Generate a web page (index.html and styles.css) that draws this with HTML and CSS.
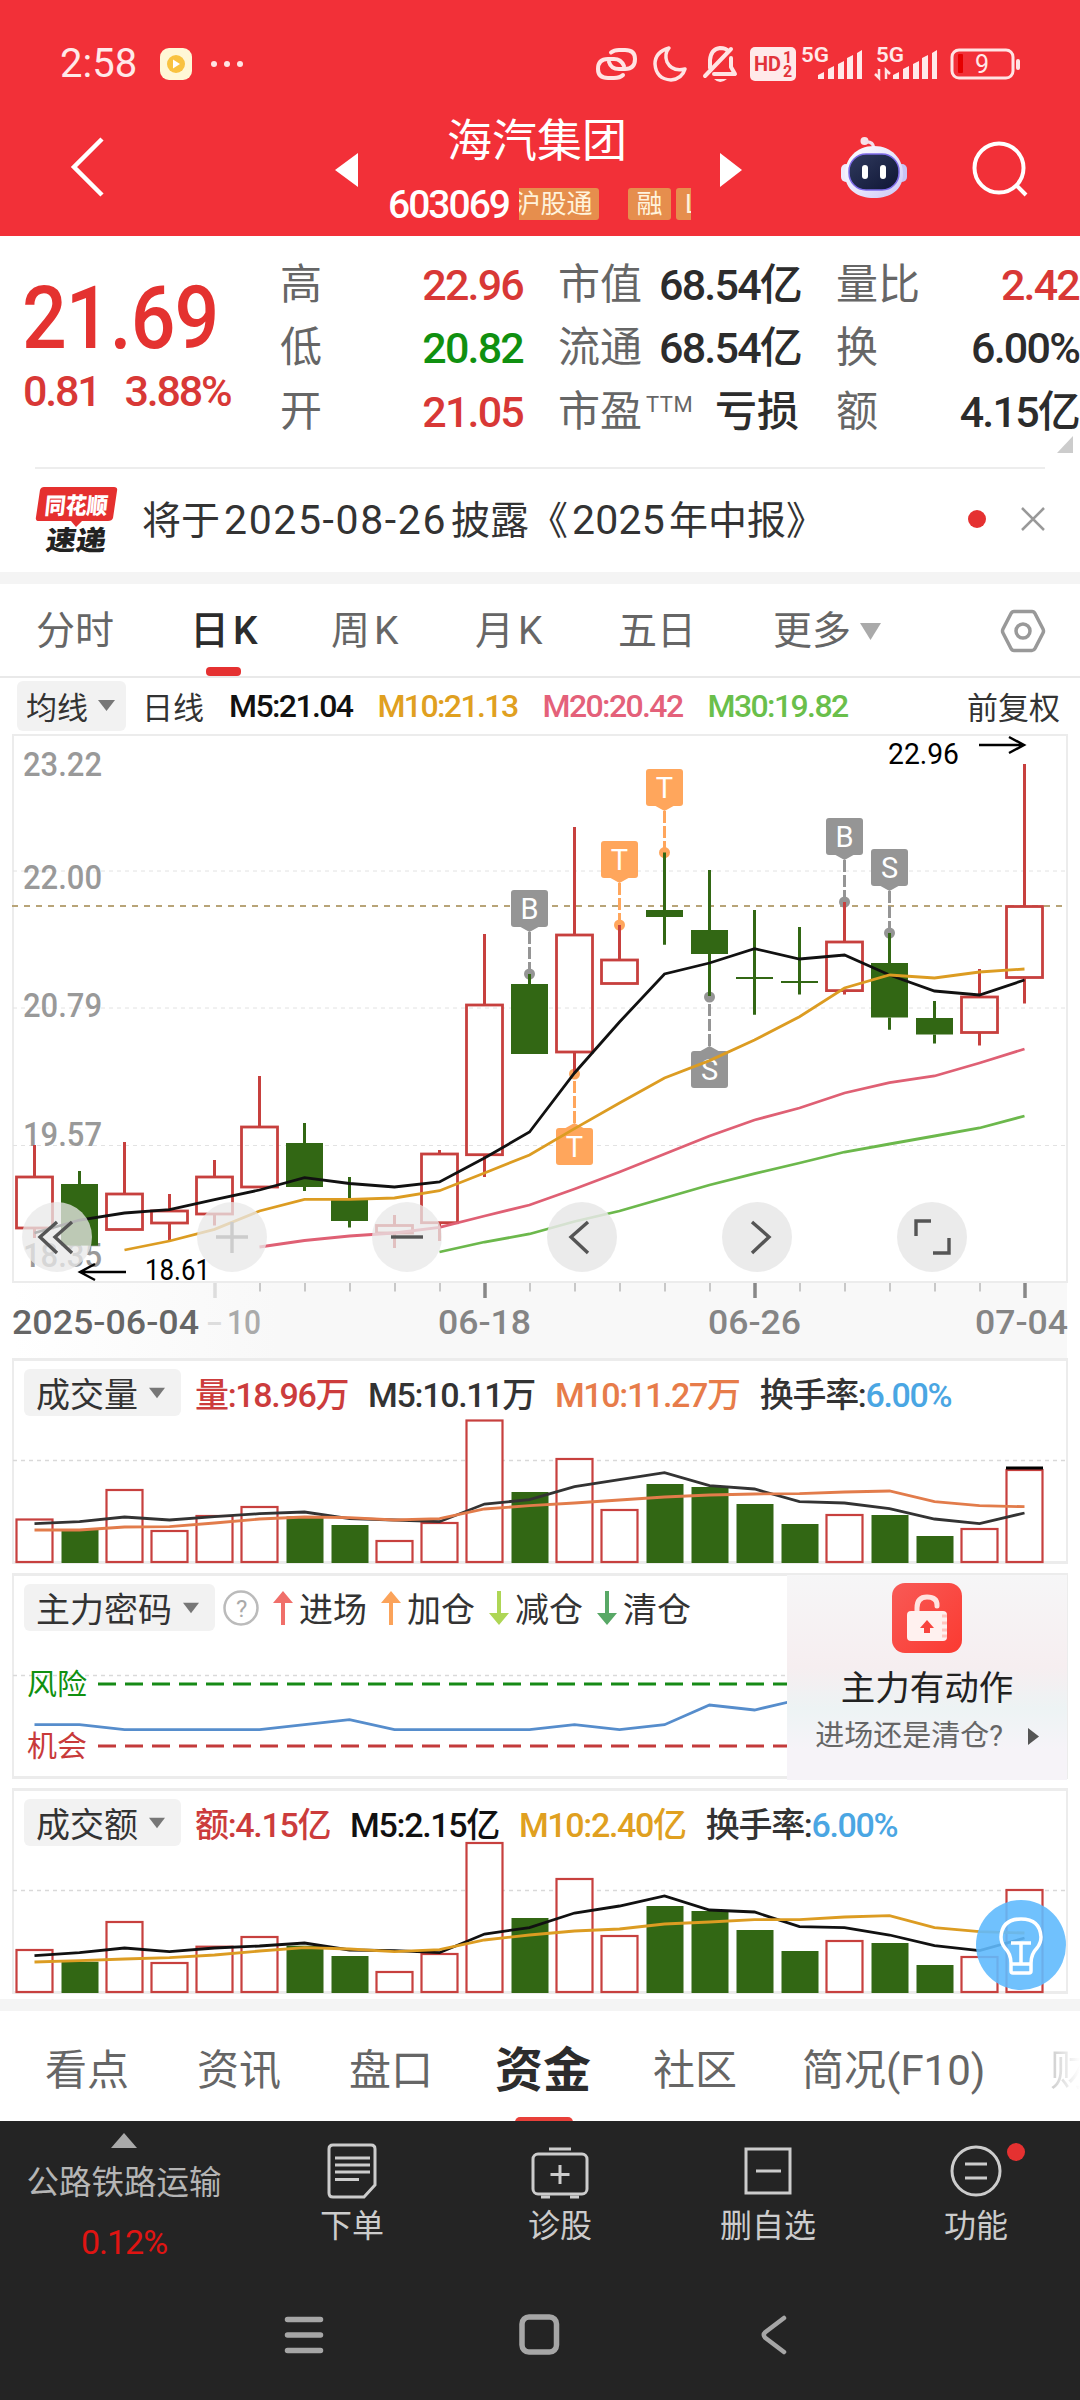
FILE: index.html
```html
<!DOCTYPE html>
<html lang="zh-CN">
<head>
<meta charset="utf-8">
<title>海汽集团 603069</title>
<link rel="stylesheet" href="styles.css">
</head>
<body>
<div class="screen">
  <header class="top">
    <div class="status">
      <span class="clock">2:58</span>
      <svg class="app" width="32" height="32" viewBox="0 0 32 32"><rect width="32" height="32" rx="9" fill="#fff7d6"/><circle cx="16" cy="16" r="9" fill="#f9c240"/><path d="M13 11.500L20 16L13 20.500Z" fill="#fff"/></svg>
      <svg class="dots" width="34" height="8" viewBox="0 0 34 8" fill="#ffe4e4"><circle cx="4" cy="4" r="3"/><circle cx="17" cy="4" r="3"/><circle cx="30" cy="4" r="3"/></svg>
      <svg class="sysicons" width="430" height="44" viewBox="594 42 430 44" fill="none" stroke="#ffe4e4" stroke-width="4">
        <path d="M611 52.500Q614 50 619 50H625Q635 50 635 59Q635 69 625 69H619Q611 69 609 62" stroke-linecap="round"/>
        <path d="M623 75Q620 78 614 78H608Q598 78 598 69Q598 59 608 59H614Q621 59 624 66" stroke-linecap="round"/>
        <path d="M669 48Q655 52 655 64Q656 79 671 80Q682 79 685 69Q672 72 667 62Q664 54 669 48Z" stroke-linejoin="round" stroke-width="3.500"/>
        <path d="M731 49L705 76M710 68V60Q711 49 720 48Q726 48 728 51M731 58V67L735 74H714" stroke-linecap="round" stroke-linejoin="round"/>
        <path d="M714 79Q720 85 727 79Z" fill="#ffe4e4" stroke="none"/>
        <rect x="750" y="47" width="46" height="34" rx="5" fill="#ffeaea" stroke="none"/>
        <g fill="#e2343b" stroke="none" font-weight="700" class="sys"><text x="754" y="71" font-size="21" textLength="27" lengthAdjust="spacingAndGlyphs">HD</text><text x="783" y="63" font-size="16">1</text><text x="783" y="77" font-size="16">2</text></g>
        <g fill="#ffe9e9" stroke="none" font-weight="600" class="sys"><text x="801" y="62" font-size="21" textLength="28" lengthAdjust="spacingAndGlyphs">5G</text><text x="876" y="62" font-size="21" textLength="28" lengthAdjust="spacingAndGlyphs">5G</text></g>
        <g fill="#ffe9e9" stroke="none"><path id="sig" d="M818 79V75L824 72V79ZM828 79V69L834 66V79ZM838 79V64L844 61V79ZM847 79V58L853 55V79ZM857 79V53L862 50V79Z"/><use href="#sig" x="75"/></g>
        <path d="M875 74L879 78V69M886 79V70L890 74" stroke-width="2.500"/>
        <rect x="952" y="50" width="61" height="28" rx="7" stroke-width="3"/>
        <rect x="958" y="54" width="5" height="19" rx="1" fill="#e50000" stroke="none"/>
        <path d="M1018 61V68" stroke-linecap="round" stroke-width="4"/>
        <text x="975" y="73" font-size="25" fill="#ffe9e9" stroke="none" class="sys">9</text>
      </svg>
    </div>
    <div class="titlebar">
      <svg class="back" width="36" height="62" viewBox="0 0 36 62" fill="none" stroke="#fff" stroke-width="4.500"><path d="M33 3L5 31L33 59"/></svg>
      <svg class="prev" width="24" height="34" viewBox="0 0 24 34"><path d="M23 0V34L0 17Z" fill="#fff"/></svg>
      <div class="names">
        <h1>海汽集团</h1>
        <div class="codes"><span class="code">603069</span><span class="tags"><i class="cut">沪股通</i><i class="rong">融</i><i class="ltag">L</i></span></div>
      </div>
      <svg class="next" width="24" height="34" viewBox="0 0 24 34"><path d="M1 0V34L23 17Z" fill="#fff"/></svg>
      <svg class="robot" width="68" height="64" viewBox="0 0 68 64">
        <defs><linearGradient id="hd" x1="0" y1="0" x2="1" y2="1"><stop offset="0" stop-color="#fff"/><stop offset=".6" stop-color="#e4e2fb"/><stop offset="1" stop-color="#c9c5f5"/></linearGradient><linearGradient id="fc" x1="0" y1="0" x2="1" y2="1"><stop offset="0" stop-color="#303a5e"/><stop offset="1" stop-color="#0e1534"/></linearGradient></defs>
        <circle cx="24.500" cy="5" r="4" fill="#f8e3ea"/><path d="M25 6Q33 5 34 12" stroke="#f3dfeb" stroke-width="3" fill="none"/>
        <rect x="1" y="28" width="10" height="18" rx="5" fill="#eeeafd"/><rect x="57" y="28" width="10" height="18" rx="5" fill="#c8c4f4"/>
        <path d="M34 10C52 10 63 23 63 38C63 54 50 62 34 62C18 62 5 54 5 38C5 23 16 10 34 10Z" fill="url(#hd)"/>
        <rect x="9" y="18" width="50" height="36" rx="17" fill="url(#fc)" stroke="#7e6be8" stroke-width="1.500"/>
        <rect x="22" y="29" width="6" height="14" rx="3" fill="#fff"/><rect x="40" y="29" width="6" height="14" rx="3" fill="#fff"/>
      </svg>
      <svg class="search" width="56" height="56" viewBox="0 0 56 56" fill="none" stroke="#fff" stroke-width="4"><circle cx="27" cy="27" r="24.500"/><path d="M44 44L54 54"/></svg>
    </div>
  </header>

  <section class="quote">
    <div class="price"><b>21.69</b><span class="chg"><span>0.81</span><span>3.88%</span></span></div>
    <dl class="c1"><div><dt>高</dt><dd class="up">22.96</dd></div><div><dt>低</dt><dd class="down">20.82</dd></div><div><dt>开</dt><dd class="up">21.05</dd></div></dl>
    <dl class="c2"><div><dt>市值</dt><dd>68.54亿</dd></div><div><dt>流通</dt><dd>68.54亿</dd></div><div><dt>市盈<sup>TTM</sup></dt><dd class="word">亏损</dd></div></dl>
    <dl class="c3"><div><dt>量比</dt><dd class="up">2.42</dd></div><div><dt>换</dt><dd>6.00%</dd></div><div><dt>额</dt><dd>4.15亿</dd></div></dl>
    <svg class="corner" width="16" height="17" viewBox="0 0 16 17"><path d="M16 0V17H0Z" fill="#ccc"/></svg>
  </section>

  <section class="notice">
    <svg class="logo" width="84" height="68" viewBox="34 484 84 68">
      <path d="M44 486H114Q118 486 117 490L113 517Q112 520 108 520H82L76 526L71 520H39Q35 520 36 516L40 489Q41 486 44 486Z" fill="#e5302f"/>
      <g class="logotext"><text transform="translate(44 512.500) skewX(-6)" font-size="23" fill="#fff" textLength="63" lengthAdjust="spacingAndGlyphs">同花顺</text><text transform="translate(45 549) skewX(-8)" font-size="27" fill="#222" textLength="60" lengthAdjust="spacingAndGlyphs">速递</text></g>
    </svg>
    <span class="msg">将于<em class="date">2025-08-26</em>披露《<em>2025</em>年中报》</span>
    <i class="reddot"></i>
    <svg class="close" width="24" height="24" viewBox="0 0 24 24" stroke="#999" stroke-width="2.500"><path d="M1 1L23 23M23 1L1 23"/></svg>
  </section>

  <nav class="periods">
    <span class="p1">分时</span><span class="k2 on">日K</span><span class="k2">周K</span><span class="k2">月K</span><span class="p5">五日</span><span class="p6">更多<svg width="21" height="17" viewBox="0 0 21 17"><path d="M0 0H21L10.500 17Z" fill="#aaa"/></svg></span>
    <svg class="hex" width="46" height="44" viewBox="0 0 46 44" fill="none" stroke="#999" stroke-width="3.500"><path d="M14 2.500H32Q34 2.500 35 4.500L43 20Q44 22 43 24L35 39.500Q34 41.500 32 41.500H14Q12 41.500 11 39.500L3 24Q2 22 3 20L11 4.500Q12 2.500 14 2.500Z"/><circle cx="23" cy="22" r="7"/></svg>
  </nav>

  <div class="legend ma">
    <span class="pill">均线<svg width="17" height="11" viewBox="0 0 17 11"><path d="M0 0H17L8.500 11Z" fill="#777"/></svg></span>
    <span>日线</span><b class="k">M5:21.04</b><b class="y">M10:21.13</b><b class="p">M20:20.42</b><b class="g">M30:19.82</b><span class="right">前复权</span>
  </div>
  <svg class="kline" id="kline" width="1080" height="621" viewBox="0 733 1080 621"></svg>

  <section class="panel vol">
    <div class="legend">
      <span class="pill">成交量<svg width="16" height="12" viewBox="0 0 17 11"><path d="M0 0H17L8.500 11Z" fill="#777"/></svg></span>
      <b class="r">量:18.96万</b><b>M5:10.11万</b><b class="o">M10:11.27万</b><b>换手率:<i class="blue">6.00%</i></b>
    </div>
    <svg id="vol" width="1080" height="146" viewBox="0 1418 1080 146"></svg>
  </section>

  <section class="panel code2">
    <div class="legend">
      <span class="pill">主力密码<svg width="16" height="12" viewBox="0 0 17 11"><path d="M0 0H17L8.500 11Z" fill="#777"/></svg></span>
      <svg class="help" width="36" height="36" viewBox="0 0 36 36"><circle cx="18" cy="18" r="16.500" fill="none" stroke="#bbb" stroke-width="2.500"/><text x="18" y="26.500" font-size="24" text-anchor="middle" fill="#aaa">?</text></svg>
      <span class="act"><svg width="20" height="34" viewBox="0 0 20 34" fill="#f06f6a"><path d="M10 0L20 12H12V34H8V12H0Z"/></svg>进场</span>
      <span class="act"><svg width="20" height="34" viewBox="0 0 20 34" fill="#fba35a"><path d="M10 0L20 12H12V34H8V12H0Z"/></svg>加仓</span>
      <span class="act"><svg width="20" height="34" viewBox="0 0 20 34" fill="#aed655"><path d="M10 34L20 22H12V0H8V22H0Z"/></svg>减仓</span>
      <span class="act"><svg width="20" height="34" viewBox="0 0 20 34" fill="#58a866"><path d="M10 34L20 22H12V0H8V22H0Z"/></svg>清仓</span>
    </div>
    <svg id="sig2" width="1080" height="146" viewBox="0 1633 1080 146"></svg>
    <div class="promo">
      <svg width="70" height="70" viewBox="0 0 70 70"><defs><linearGradient id="rd" x1="0" y1="0" x2="1" y2="1"><stop offset="0" stop-color="#f85a56"/><stop offset="1" stop-color="#fb3a31"/></linearGradient></defs><rect width="70" height="70" rx="13" fill="url(#rd)"/><path d="M25 29V25Q25 14 35 14Q45 14 45 22V23" fill="none" stroke="#ffe3e0" stroke-width="5" stroke-linecap="round"/><rect x="15" y="28" width="40" height="30" rx="4" fill="#fff1ef"/><path d="M35 37L42 45H38V50H32V45H28Z" fill="#f8443e"/><path d="M50 33H55M50 40H55M50 47H55M50 53H55" stroke="#ffc5bf" stroke-width="3"/></svg>
      <strong>主力有动作</strong>
      <span>进场还是清仓?<svg width="11" height="17" viewBox="0 0 11 17"><path d="M0 0L11 8.500L0 17Z" fill="#555"/></svg></span>
    </div>
  </section>

  <section class="panel amt">
    <div class="legend">
      <span class="pill">成交额<svg width="16" height="12" viewBox="0 0 17 11"><path d="M0 0H17L8.500 11Z" fill="#777"/></svg></span>
      <b class="r">额:4.15亿</b><b class="k">M5:2.15亿</b><b class="y">M10:2.40亿</b><b>换手率:<i class="blue">6.00%</i></b>
    </div>
    <svg id="amt" width="1080" height="146" viewBox="0 1848 1080 146"></svg>
    <svg class="bulb" width="90" height="90" viewBox="0 0 90 90" fill="none" stroke="#fff" stroke-width="3.500"><circle cx="45" cy="45" r="45" fill="#60bafd" fill-opacity=".9" stroke="none"/><path d="M35 63Q35 54 29 48Q25 43 25 37Q26 19 45 19Q64 19 65 37Q65 43 61 48Q55 54 55 63V71Q55 73 53 73H37Q35 73 35 71ZM35 64H55M45 64V43M35 43H55"/></svg>
  </section>

  <nav class="tabs"><span class="t1">看点</span><span class="t2">资讯</span><span class="t3">盘口</span><span class="t4 on">资金</span><span class="t5">社区</span><span class="t6">简况<em>(F10)</em></span><span class="t7">财</span></nav>

  <footer>
    <div class="bar">
      <div class="sector"><svg width="26" height="15" viewBox="0 0 26 15"><path d="M13 0L26 15H0Z" fill="#aaa"/></svg><span>公路铁路运输</span><em>0.12%</em></div>
      <div class="item"><svg width="58" height="56" viewBox="0 0 58 56" fill="none" stroke="#ccc" stroke-width="3"><path d="M10 2H48Q52 2 52 6V42L41 54H10Q6 54 6 50V6Q6 2 10 2ZM12 15H47M12 22H47M12 29H47M12 36.500H36"/></svg>下单</div>
      <div class="item"><svg width="58" height="56" viewBox="0 0 58 56" fill="none" stroke="#ccc" stroke-width="3"><rect x="2" y="11" width="54" height="40" rx="5"/><path d="M18 6H40M29 22V41M19.500 31.500H38.500M10 54H19M39 54H48"/></svg>诊股</div>
      <div class="item"><svg width="58" height="56" viewBox="0 0 58 56" fill="none" stroke="#ccc" stroke-width="3"><rect x="7" y="6" width="44" height="44"/><path d="M17 28H42"/></svg>删自选</div>
      <div class="item"><svg width="58" height="56" viewBox="0 0 58 56" fill="none" stroke="#ccc" stroke-width="3"><circle cx="29" cy="28" r="24"/><path d="M18 21H40M18 35H40"/></svg>功能<i class="badge"></i></div>
    </div>
    <svg class="sysnav" width="1080" height="60" viewBox="0 2305 1080 60" fill="none" stroke="#a6a6a6" stroke-width="5.500" stroke-linecap="round" stroke-linejoin="round"><path d="M287.500 2319.500H320.500M287.500 2335H320.500M287.500 2350.500H320.500"/><rect x="522" y="2317" width="34.500" height="35" rx="7"/><path d="M784 2318L765.500 2332Q762 2335 765.500 2338L784 2352" stroke-width="4.500"/></svg>
  </footer>
</div>
<script src="chart.js"></script>
</body>
</html>
```
FILE: styles.css
```css
*, *::before, *::after { box-sizing: border-box; margin: 0; padding: 0; }
body { width: 1080px; height: 2400px; overflow: hidden; background: #fff; color: #333; font-family: Roboto, "Noto Sans CJK SC", sans-serif; }
svg { display: block; flex: none; }
i, em { font-style: normal; }
.screen { width: 1080px; height: 2400px; display: flex; flex-direction: column; overflow: hidden; }
.screen > * { flex: none; }

.top { height: 236px; background: #f23038; color: #fff; }
.status { height: 105px; padding: 22px 0 0 60px; display: flex; align-items: center; }
.clock { width: 100px; font-size: 40px; color: #ffe9e9; }
.app { margin-right: 18px; }
.sysicons { margin-left: 350px; }
.sys { font-family: Roboto, sans-serif; }
.titlebar { height: 131px; display: flex; align-items: flex-start; }
.back { margin: 31px 0 0 69px; }
.prev { margin: 48px 0 0 230px; }
.names { width: 303px; margin-left: 29px; }
.names h1 { margin: 11px 0 0 59px; font-size: 45px; line-height: 52px; font-weight: 400; white-space: nowrap; }
.codes { display: flex; margin-top: 20px; }
.code { width: 131px; font-size: 39px; line-height: 34px; letter-spacing: -2px; font-weight: 500; }
.tags { width: 172px; height: 32px; overflow: hidden; display: flex; font-size: 26px; line-height: 32px; color: #fff3dc; }
.tags i { flex: none; height: 32px; background: #e68e4d; border-radius: 3px; text-align: center; }
.cut { width: 91px; margin-left: -11px; margin-right: 29px; }
.rong { width: 43px; margin-right: 5px; }
.tags .ltag { width: 30px; text-align: left; padding-left: 9px; }
.next { margin: 48px 0 0 28px; }
.robot { margin: 31px 0 0 97px; }
.search { margin: 36px 0 0 64px; }

.quote { height: 231px; display: flex; position: relative; padding-top: 17px; }
.price { width: 280px; padding-left: 22px; color: #e43230; }
.price b { display: block; margin-top: 15px; font-size: 87px; line-height: 100px; font-weight: 500; letter-spacing: -1px; transform: scaleX(.905); transform-origin: 0 0; }
.chg { display: flex; gap: 25px; font-size: 43px; line-height: 48px; margin-top: -1px; letter-spacing: -2.200px; font-weight: 500; padding-left: 1px; color: #d83836; }
.quote dl { height: 190px; }
.quote dl div { height: 63.500px; display: flex; justify-content: space-between; align-items: center; line-height: 60px; white-space: nowrap; }
.quote dt { font-size: 42px; color: #666; }
.quote dd { font-size: 43px; letter-spacing: -1.800px; font-weight: 500; color: #2c2c2c; margin-right: -1px; }
.quote dd.word { font-size: 42px; letter-spacing: 0; margin-right: 1px; }
.quote .up { color: #d83836; }
.quote .down { color: #109010; }
.quote sup { font-size: 22px; line-height: 20px; vertical-align: 14px; margin-left: 4px; letter-spacing: .5px; }
.c1 { width: 242px; }
.c2 { width: 242px; margin-left: 36px; }
.c3 { width: 242px; margin-left: 36px; }
.corner { position: absolute; left: 1057px; top: 200px; }

.notice { height: 118px; margin-top: -1px; display: flex; align-items: center; padding: 0 35px 14px 34px; position: relative; border-bottom: 12px solid #f4f4f4; }
.notice::before { content: ""; position: absolute; left: 35px; right: 35px; top: 1px; height: 2px; background: #ededed; }
.logo { margin-top: 13px; }
.logotext { font-family: "Noto Sans CJK SC", sans-serif; font-weight: 900; }
.msg { margin: 10px 0 0 24px; font-size: 39px; white-space: nowrap; }
.msg em { margin: 0 4px; font-size: 41px; letter-spacing: .2px; }
.msg .date { letter-spacing: 1.600px; }
.reddot { width: 18px; height: 18px; border-radius: 50%; background: #e53131; margin: 14px 1px 0 auto; }
.close { margin: 14px 0 0 34px; }

.periods { height: 94px; border-bottom: 2px solid #e9e9e9; display: grid; grid-template-columns: 190px 141px 144px 143px 155px 227px auto; align-items: center; font-size: 39px; line-height: 50px; color: #666; padding-top: 2px; }
.periods > span { display: flex; align-items: center; position: relative; }
.k2 { letter-spacing: 4px; }
.p1 { padding-left: 36px; }
.p6 svg { margin-left: 9px; }
.periods .on { color: #2c2c2c; font-weight: 500; }
.periods .on::after { content: ""; position: absolute; left: 16px; top: 61px; width: 35px; height: 9px; border-radius: 4px; background: #e53131; }

.legend { display: flex; align-items: center; gap: 20px; white-space: nowrap; font-size: 34px; letter-spacing: -.039em; color: #333; }
.legend b { font-weight: 500; }
.legend span { letter-spacing: 0; }
.pill { display: flex; align-items: center; height: 47px; background: #f2f2f2; border-radius: 6px; padding: 0 16px 0 12px; gap: 11px; margin-right: -6px; }
.ma { height: 55px; padding: 0 20px 0 17px; gap: 25px; font-size: 31px; }
.ma b { font-size: 32px; letter-spacing: -1.600px; }
.ma .pill { height: 50px; padding: 0 11px 0 9px; gap: 10px; margin-right: -9px; }
.right { margin-left: auto; }
.k { color: #111; }
.y { color: #e0a020; }
.p { color: #e4617a; }
.g { color: #6abf4b; }
.r { color: #cc3c3c; }
.o { color: #e77c4a; }
.blue { color: #4aa6e3; }
.kline { overflow: visible; }

.panel { position: relative; height: 215px; }
.panel > .legend { height: 58px; margin-top: 2px; padding: 7px 0 0 24px; }
.vol { margin-top: 4px; }
.panel > svg { overflow: visible; }
.panel::before { content: ""; position: absolute; left: 12px; top: 0; width: 1056px; height: 206px; border: 3px solid #ececec; border-left-width: 2px; border-right-width: 2px; z-index: -1; }
.code2 > .legend { gap: 6px; }
.help { margin-left: 8px; font-family: Roboto, sans-serif; }
.act { display: flex; align-items: center; gap: 6px; margin-left: 8px; }
.promo { position: absolute; left: 787px; top: 2px; width: 280px; height: 205px; background: linear-gradient(180deg, #f6f6f7 0%, #f6eef0 45%, #edf3f4 65%, #f6f3f8 85%); display: flex; flex-direction: column; align-items: center; padding-top: 8px; }
.promo strong { font-weight: 400; font-size: 34.500px; line-height: 40px; margin-top: 15px; color: #222; }
.promo span { font-size: 29px; line-height: 36px; margin-top: 10px; color: #666; display: flex; align-items: center; gap: 25px; }
.bulb { position: absolute; left: 976px; top: 112px; }
.amt { height: 211px; }

.tabs { position: relative; height: 122px; border-top: 12px solid #f4f4f4; font-size: 42px; line-height: 50px; color: #666; display: grid; grid-template-columns: 197px 152px 146px 158px 149px 248px 30px; align-items: center; overflow: hidden; white-space: nowrap; padding-top: 9px; }
.t1 { padding-left: 45px; }
.tabs .on { color: #2c2c2c; font-weight: 700; font-size: 48px; position: relative; }
.tabs .on::after { content: ""; position: absolute; left: 20px; top: 71px; width: 58px; height: 10px; border-radius: 5px; background: #e8403a; }
.tabs .t7 { background: linear-gradient(90deg, #ccc, #fff); -webkit-background-clip: text; color: transparent; }
.tabs em { letter-spacing: 0; }

footer { height: 279px; background: #242424; }
.bar { width: 1080px; height: 184px; display: flex; }
.sector { width: 248px; display: flex; flex-direction: column; align-items: center; color: #b5b5b5; font-size: 32.500px; padding-top: 12px; line-height: 40px; }
.sector span { margin-top: 15px; }
.sector em { margin-top: 19px; color: #e01412; font-size: 34px; letter-spacing: -1px; }
.item { width: 208px; display: flex; flex-direction: column; align-items: center; color: #ccc; font-size: 32px; line-height: 40px; padding-top: 22px; gap: 7px; position: relative; }
.badge { position: absolute; left: 135px; top: 22px; width: 18px; height: 18px; border-radius: 50%; background: #e53131; }
```
FILE: chart.js
```js
const NS = 'http://www.w3.org/2000/svg';
const RED = '#c7403e', GREEN = '#326714';
const X = i => 34.5 + 45 * i;

function add(svg, tag, attrs, text) {
  const el = document.createElementNS(NS, tag);
  for (const k in attrs) el.setAttribute(k, attrs[k]);
  if (text) el.textContent = text;
  svg.appendChild(el);
  return el;
}
const line = (s, ys, color, start = 0, w = 2.8) =>
  add(s, 'polyline', { points: ys.map((y, i) => X(i + start) + ',' + y).join(' '), fill: 'none', stroke: color, 'stroke-width': w });
const label = (s, t, x, y, w, size, color, weight = 500) =>
  add(s, 'text', { x, y, textLength: w, lengthAdjust: 'spacingAndGlyphs', 'font-size': size, fill: color, 'font-weight': weight }, t);
const path = (s, d, color, w, extra = {}) =>
  add(s, 'path', { d, fill: 'none', stroke: color, 'stroke-width': w, ...extra });

// [up, high, body top, body bottom, low]
const candles = [
  [1,1145,1177,1228,1238],[0,1171,1184,1245.6,1245],[1,1142,1194,1229.5,1229],[1,1194,1211,1223,1240],
  [1,1160,1177,1214,1225.5],[1,1076,1127,1187,1187],[0,1123,1143,1187,1191],[0,1177,1199.5,1221,1227.5],
  [1,1215,1225.5,1233,1248],[1,1150,1154,1222.7,1241],[1,934,1005,1154.7,1177],[0,974,984,1054,1054],
  [1,827,935,1052,1073],[1,925,960,983.5,983],[0,852.6,910,917,944.7],[0,870,930,954,996],
  [0,910,977,979,1014.7],[0,927,981,983,994.5],[1,902,942,990.6,994.5],[0,933,963,1017.5,1029.7],
  [0,1001,1018,1034.5,1043.6],[1,969,997,1032.5,1045.5],[1,764,906.5,977.5,1003.6]
];

const k = document.getElementById('kline');
const defs = add(k, 'defs', {});
defs.innerHTML = '<linearGradient id="ax" x1="0" x2="1" y1="0" y2="0"><stop offset="0" stop-color="#fff"/><stop offset=".25" stop-color="#f8f8f8"/><stop offset="1" stop-color="#f8f8f8"/></linearGradient>';
add(k, 'rect', { x: 13, y: 1283, width: 1054, height: 75, fill: 'url(#ax)' });
add(k, 'rect', { x: 13, y: 735, width: 1054, height: 547, fill: '#fff', stroke: '#ececec', 'stroke-width': 2 });
[871, 1008, 1145.5].forEach(y => path(k, `M13 ${y}H1065`, '#e2e2e2', 1, { 'stroke-dasharray': '4 4' }));
[['23.22',775.5],['22.00',889],['20.79',1016.5],['19.57',1146],['18.35',1266.5]].forEach(([t, y]) => label(k, t, 23, y, 79, 33, '#999'));
path(k, 'M12 906H1065', '#b8a478', 2, { 'stroke-dasharray': '6 6' });

const marks = [[11,'B','#959595',890,974],[13,'T','#ffa65c',841,925],[14,'T','#ffa65c',769,852.6],[18,'B','#959595',818,902],[19,'S','#959595',849,933],[15,'S','#959595',1051,997],[12,'T','#ffa65c',1128,1074]];
marks.forEach(([i, t, c, top, dot]) => {
  const x = X(i), down = dot > top, edge = down ? top + 37 : top, tip = down ? edge + 5 : edge - 5;
  add(k, 'circle', { cx: x, cy: dot, r: 5.5, fill: c });
  path(k, `M${x} ${tip}V${dot}`, c, 3, { 'stroke-dasharray': '12 3' });
  add(k, 'rect', { x: x - 18.5, y: top, width: 37, height: 37, rx: 3, fill: c });
  add(k, 'path', { d: `M${x - 9} ${edge}L${x} ${tip}L${x + 9} ${edge}Z`, fill: c });
  add(k, 'text', { x, y: top + 29, 'text-anchor': 'middle', 'font-size': 29, fill: '#fff' }, t);
});

candles.forEach(([up, h, t, b, l], i) => {
  const x = X(i), c = up ? RED : GREEN;
  path(k, `M${x} ${h}V${t}M${x} ${b}V${l}`, c, 3);
  if (up) add(k, 'rect', { x: x - 18, y: t, width: 36, height: b - t, fill: 'none', stroke: c, 'stroke-width': 2.8 });
  else add(k, 'rect', { x: x - 18.5, y: t, width: 37, height: b - t, fill: c });
});
line(k, [1233,1220,1213,1209.6,1199.7,1190,1177.6,1183.5,1187,1182,1158,1132,1073,1022,974,963,948.7,959,955,975,991,995,980], '#111');
line(k, [1250,1241,1229.4,1211,1199.4,1199.4,1198,1190.7,1173,1155,1128.6,1103,1078,1060.6,1040,1016.7,988,975,978,972,969], '#dc9c22', 2);
line(k, [1247,1240.5,1236,1233,1227.4,1216,1205,1189,1172,1154,1136,1120,1108,1093,1082.7,1076,1063,1049], '#df6074', 5);
line(k, [1252,1242,1234,1221.5,1211,1198,1185,1173.6,1163,1152,1144,1136,1128,1116], '#6cb84c', 9);

label(k, '22.96', 888, 764, 71, 29, '#000', 400);
path(k, 'M979 745H1023M1009 737L1024 745L1009 753', '#000', 2.4);
label(k, '18.61', 145, 1279.5, 65, 29, '#000', 400);
path(k, 'M126 1272H80M95 1264L80 1272L95 1280', '#000', 2.4);

const icons = ['M57 1222L40 1237L57 1253M72 1222L55 1237L72 1253','M216 1237H248M232 1222V1253','M391 1237H423','M588 1222L571 1237L588 1253','M752 1222L769 1237L752 1253','M916 1236V1221H931M933 1253H949V1238'];
icons.forEach((d, i) => {
  add(k, 'circle', { cx: 57 + 175 * i, cy: 1237, r: 35, fill: '#e8e8e8', 'fill-opacity': i < 3 ? .76 : .85 });
  path(k, d, i === 1 ? '#ccc' : '#555', 3.4);
});

for (let i = 4; i < 23; i++) {
  const major = (i - 4) % 6 === 0;
  path(k, `M${X(i) + .5} 1283V${major ? 1298 : 1291.5}`, major ? (i === 4 ? '#ddd' : '#888') : '#c8c8c8', major ? 3.5 : 2);
}
label(k, '2025-06-04', 12, 1334, 187, 34, '#666');
label(k, '-', 206, 1334, 17, 34, '#ddd');
label(k, '10', 227, 1334, 34, 34, '#aaa');
label(k, '06-18', 438, 1334, 93, 34, '#858585');
label(k, '06-26', 708, 1334, 93, 34, '#858585');
label(k, '07-04', 975, 1334, 93, 34, '#858585');

function bars(id, tops, base, grid) {
  const s = document.getElementById(id);
  path(s, `M13 ${grid}H1065`, '#d9d9d9', 1.3, { 'stroke-dasharray': '4 4' });
  tops.forEach((t, i) => {
    const x = X(i);
    if (candles[i][0]) add(s, 'rect', { x: x - 18, y: t, width: 36, height: base - t, fill: '#fff', stroke: RED, 'stroke-width': 2.2 });
    else add(s, 'rect', { x: x - 18, y: t, width: 37, height: base + 1 - t, fill: GREEN });
  });
  return s;
}
const v = bars('vol', [1519.5,1530,1490,1531,1516,1507,1516.5,1525,1541,1523,1420.5,1492,1459,1510,1484,1487,1504,1524,1515,1515,1536,1529,1470], 1562, 1460.5);
path(v, 'M1006 1468H1043', '#000', 3);
line(v, [1523.7,1521.7,1517,1520,1516.7,1513.7,1512,1518.7,1520,1521.7,1504,1499.7,1486.7,1479.7,1472.7,1485.7,1489,1501.7,1503,1508.7,1519,1523.7,1513], '#333');
line(v, [1530,1530,1527,1526.7,1523,1519,1517,1517.7,1520,1518.7,1509,1505.7,1503,1500,1497,1495,1494,1493.7,1492,1491,1501.7,1505.7,1506.7], '#e27c4b');

const a = bars('amt', [1950,1961.7,1922,1963,1946.7,1937,1945.7,1956,1972,1954,1843,1918,1879,1936,1906,1911,1930,1951,1941,1943,1965,1957,1890], 1992, 1890.5);
line(a, [1955.7,1952.7,1948,1951.7,1948,1946,1943,1950,1950.7,1952.7,1934,1927.7,1913,1906,1896,1910,1912,1926.7,1927.7,1935,1945.7,1950.7,1938], '#111');
line(a, [1962,1960.7,1959,1957.7,1955,1951,1947.7,1949,1951.7,1949.7,1940,1935,1931,1929,1924,1922,1919.7,1919.7,1917,1915.7,1927.7,1931.7,1933], '#dc9c22');

const m = document.getElementById('sig2');
path(m, 'M13 1675.5H787', '#d9d9d9', 1.3, { 'stroke-dasharray': '4 4' });
path(m, 'M98 1684H787', '#168a16', 3, { 'stroke-dasharray': '18 9' });
path(m, 'M98 1746H787', '#c33b3b', 3, { 'stroke-dasharray': '18 9' });
label(m, '风险', 27, 1695, 60, 29, '#109010', 400);
label(m, '机会', 27, 1757, 60, 29, '#c83a3a', 400);
line(m, [1724.7,1724.7,1729.7,1729.7,1729.7,1729.7,1724.7,1719.7,1729.7,1729.7,1729.7,1729.7,1724.7,1729.7,1724.7,1705,1710,1699.5], '#568dcc');
```
